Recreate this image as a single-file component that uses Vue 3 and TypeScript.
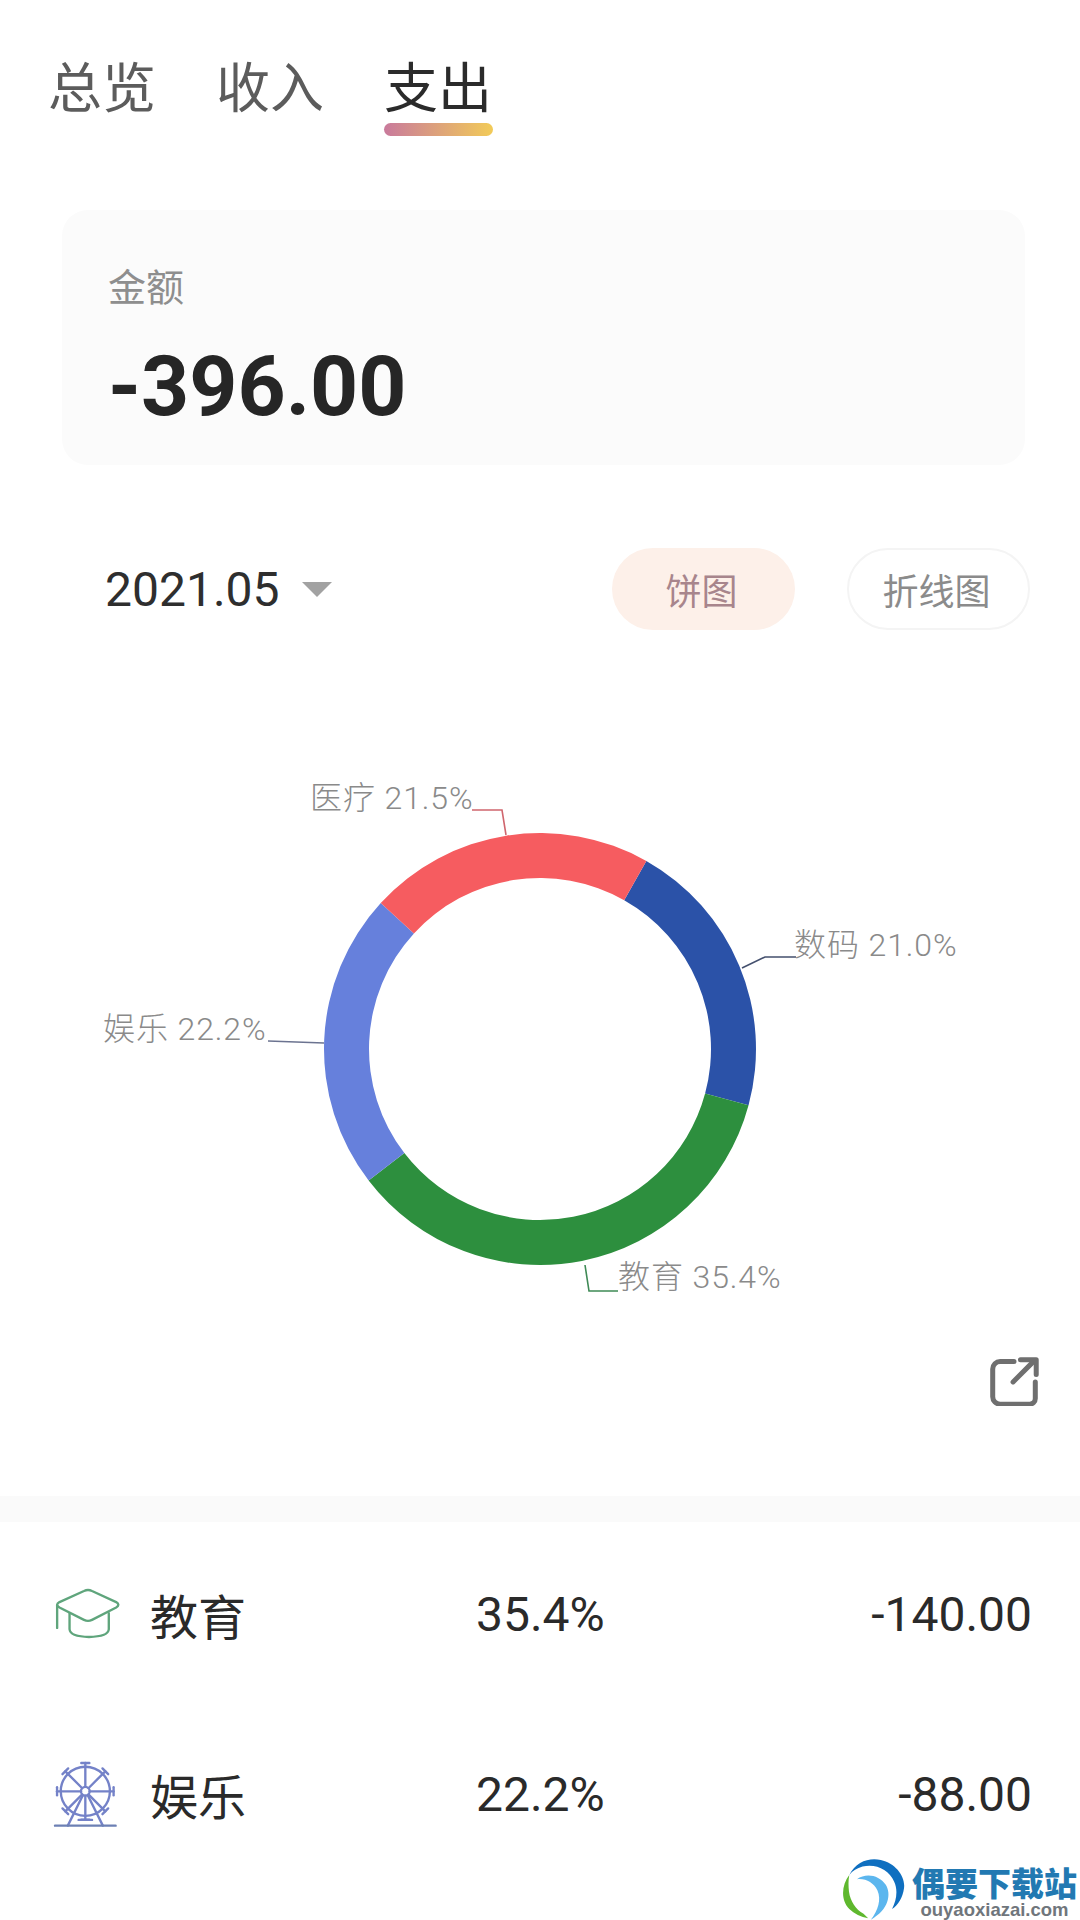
<script setup lang="ts">
interface Slice { color: string; from: number; to: number }
interface Label { text: string; x: number; y: number; line: string; color: string }
interface Row { name: string; pct: string; amount: string; kind: string }

const tabs = ['总览', '收入', '支出']
const cx = 540
const cy = 349
const outer = 216
const inner = 171

const slices: Slice[] = [
  { color: '#2b52a8', from: 29.5, to: 105.1 },
  { color: '#2d8f3e', from: 105.1, to: 232.5 },
  { color: '#6680dc', from: 232.5, to: 312.5 },
  { color: '#f65c60', from: 312.5, to: 389.5 }
]

function pt(r: number, deg: number): string {
  const a = (deg * Math.PI) / 180
  return `${(cx + r * Math.sin(a)).toFixed(2)} ${(cy - r * Math.cos(a)).toFixed(2)}`
}
function arc(s: Slice): string {
  const large = s.to - s.from > 180 ? 1 : 0
  return `M${pt(outer, s.from)}A${outer} ${outer} 0 ${large} 1 ${pt(outer, s.to)}L${pt(inner, s.to)}A${inner} ${inner} 0 ${large} 0 ${pt(inner, s.from)}Z`
}

const labels: Label[] = [
  { text: '医疗 21.5%', x: 310, y: 109, line: '472,110 502,110 506,135', color: '#d0666e' },
  { text: '数码 21.0%', x: 794, y: 256, line: '796,257 765,257 742,268', color: '#44506e' },
  { text: '娱乐 22.2%', x: 103, y: 340, line: '268,341 324,343', color: '#6b7390' },
  { text: '教育 35.4%', x: 618, y: 588, line: '618,591 589,591 585,565', color: '#3f8a56' }
]

const rows: Row[] = [
  { name: '教育', pct: '35.4%', amount: '-140.00', kind: 'cap' },
  { name: '娱乐', pct: '22.2%', amount: '-88.00', kind: 'wheel' }
]

const spokes = [0, 45, 90, 135, 180, 225, 270, 315].map((d) => {
  const a = (d * Math.PI) / 180
  const s = Math.sin(a)
  const c = Math.cos(a)
  const ex = 138 + 84 * s
  const ey = 693 - 84 * c
  return {
    line: `M${138 + 13 * s} ${693 - 13 * c}L${ex} ${ey}`,
    bar: `M${ex - 12 * c} ${ey - 12 * s}L${ex + 12 * c} ${ey + 12 * s}`
  }
})
</script>

<template>
  <div class="page">
    <nav class="tabs">
      <div v-for="(t, i) in tabs" :key="t" class="tab" :class="{ active: i === 2 }">{{ t }}</div>
    </nav>

    <section class="card">
      <div class="card-label">金额</div>
      <div class="card-value">-396.00</div>
    </section>

    <div class="controls">
      <div class="month">
        <span>2021.05</span>
        <i class="caret"></i>
      </div>
      <div class="pills">
        <div class="pill on">饼图</div>
        <div class="pill off">折线图</div>
      </div>
    </div>

    <svg class="chart" width="1080" height="700" viewBox="0 0 1080 700">
      <path v-for="s in slices" :key="s.color" :d="arc(s)" :fill="s.color" />
      <polyline
        v-for="l in labels"
        :key="l.line"
        :points="l.line"
        fill="none"
        :stroke="l.color"
        stroke-width="1.6"
      />
      <text v-for="l in labels" :key="l.text" :x="l.x" :y="l.y" class="chart-label">{{ l.text }}</text>
    </svg>

    <div class="export-row">
      <svg width="50" height="50" viewBox="0 0 54 54" fill="none" stroke="#6f6f6f" stroke-width="5.4" stroke-linecap="round" stroke-linejoin="round">
        <path d="M27 6H12a8 8 0 0 0-8 8v30a8 8 0 0 0 8 8h32a6 6 0 0 0 6-6V28" />
        <path d="M26 28L49 5" />
        <path d="M34 4H51V20" />
      </svg>
    </div>

    <div class="band"></div>

    <section class="list">
      <div v-for="r in rows" :key="r.name" class="row">
        <div class="row-icon">
          <svg v-if="r.kind === 'cap'" width="66" height="52" viewBox="45 85 196 155" fill="none" stroke="#5fa57c" stroke-width="7" stroke-linecap="round" stroke-linejoin="round">
            <path d="M131 94Q143 88 155 94L227 127Q240 135 227 143L155 180Q143 186 131 180L58 143Q44 135 58 127Z" />
            <path d="M51 137V204" />
            <path d="M88 160V208Q90 230 146 231Q203 230 205 208V160" />
          </svg>
          <svg v-else class="wheel" width="66" height="68" viewBox="42 600 196 202" fill="none" stroke="#7482c8" stroke-width="7" stroke-linecap="round">
            <circle cx="138" cy="693" r="73" />
            <circle cx="138" cy="693" r="13" />
            <g v-for="s in spokes" :key="s.line">
              <path :d="s.line" />
              <path :d="s.bar" />
            </g>
            <path d="M130 706L86 795M146 706L190 795M118 778H158" />
            <path d="M48 795H228" stroke="#6c80b4" />
          </svg>
        </div>
        <div class="row-name">{{ r.name }}</div>
        <div class="row-pct">{{ r.pct }}</div>
        <div class="row-amount">{{ r.amount }}</div>
      </div>
    </section>

    <div class="watermark">
      <svg width="65" height="62" viewBox="60 115 196 185">
        <path d="M85 165C105 125 145 112 180 120C225 130 255 170 250 205C246 235 232 255 214 268C228 240 232 210 220 185C205 150 165 130 125 140C108 145 95 153 85 165Z" fill="#0f6fc0" />
        <path d="M85 165C62 195 58 240 85 268C100 283 120 292 142 296L128 282C105 270 88 245 84 215C82 195 82 180 85 165Z" fill="#5fb82e" />
        <path d="M108 178C135 158 175 165 195 195C212 222 205 270 150 300C172 272 182 240 170 212C158 188 135 175 108 178Z" fill="#5cb6ee" />
      </svg>
      <div class="wm-text">
        <div class="wm-cn">偶要下载站</div>
        <div class="wm-en">ouyaoxiazai.com</div>
      </div>
    </div>
  </div>
</template>

<style scoped>
.page {
  position: relative;
  width: 1080px;
  height: 1920px;
  overflow: hidden;
  background: #fff;
  font-family: Roboto, "Noto Sans CJK SC", sans-serif;
  color: #2a2a2a;
}
.tabs {
  display: flex;
  gap: 60px;
  padding: 53px 0 0 48px;
}
.tab {
  position: relative;
  font-size: 54px;
  line-height: 64px;
  color: #5c5c5c;
  font-family: "Noto Sans CJK SC", sans-serif;
}
.tab.active {
  color: #2b2b2b;
}
.tab.active::after {
  content: "";
  position: absolute;
  left: 0;
  right: -1px;
  top: 70px;
  height: 13px;
  border-radius: 7px;
  background: linear-gradient(90deg, #c97a9c, #f2cb58);
}
.card {
  margin: 93px 55px 0 62px;
  height: 255px;
  box-sizing: border-box;
  padding: 50px 0 0 46px;
  border-radius: 26px;
  background: #fbfbfb;
}
.card-label {
  font-family: "Noto Sans CJK SC", sans-serif;
  font-size: 38px;
  line-height: 50px;
  color: #8e8e8e;
}
.card-value {
  margin-top: 27px;
  font-size: 84px;
  line-height: 100px;
  font-weight: 700;
  color: #262626;
}
.controls {
  display: flex;
  align-items: center;
  justify-content: space-between;
  margin-top: 83px;
  padding: 0 50px 0 105px;
}
.month {
  display: flex;
  align-items: center;
  gap: 22px;
  font-size: 48px;
  color: #2e2e2e;
}
.caret {
  width: 0;
  height: 0;
  border-left: 15px solid transparent;
  border-right: 15px solid transparent;
  border-top: 15px solid #a2a2a2;
}
.pills {
  display: flex;
  gap: 52px;
}
.pill {
  box-sizing: border-box;
  width: 183px;
  height: 82px;
  border-radius: 41px;
  display: flex;
  align-items: center;
  justify-content: center;
  font-family: "Noto Sans CJK SC", sans-serif;
  font-size: 36px;
  padding-right: 4px;
}
.pill.on {
  background: #fdf0e9;
  color: #a8858c;
}
.pill.off {
  border: 2px solid #f4f4f4;
  color: #8b8b8b;
}
.chart {
  display: block;
  margin-top: 70px;
}
.chart-label {
  font-family: Roboto, "Noto Sans CJK SC", sans-serif;
  font-size: 32px;
  letter-spacing: 0.9px;
  font-weight: 300;
  fill: #8a8a8a;
}
.export-row {
  display: flex;
  justify-content: flex-end;
  padding-right: 41px;
  margin-top: -44px;
}
.band {
  height: 26px;
  margin-top: 90px;
  background: #fafafa;
}
.list {
  display: flex;
  flex-direction: column;
  padding-top: 2px;
}
.row {
  display: flex;
  align-items: center;
  height: 180px;
  padding: 0 48px 0 55px;
}
.row-icon {
  width: 95px;
  display: flex;
}
.wheel {
  margin-left: -2px;
}
.row-name {
  width: 326px;
  font-family: "Noto Sans CJK SC", sans-serif;
  font-size: 48px;
}
.row-pct {
  font-size: 48px;
}
.row-amount {
  margin-left: auto;
  font-size: 48px;
}
.watermark {
  position: absolute;
  right: 0;
  bottom: 0;
  display: flex;
  align-items: flex-start;
  gap: 6px;
  padding-right: 3px;
}
.wm-text {
  display: flex;
  flex-direction: column;
  align-items: center;
  padding-top: 8px;
}
.wm-cn {
  font-family: "Noto Sans CJK SC", sans-serif;
  font-weight: 900;
  font-size: 33px;
  line-height: 32px;
  color: #2279b2;
}
.wm-en {
  font-family: "Liberation Sans", sans-serif;
  font-weight: 700;
  font-size: 18.5px;
  line-height: 20px;
  margin-top: 2px;
  color: #70767c;
}
</style>
